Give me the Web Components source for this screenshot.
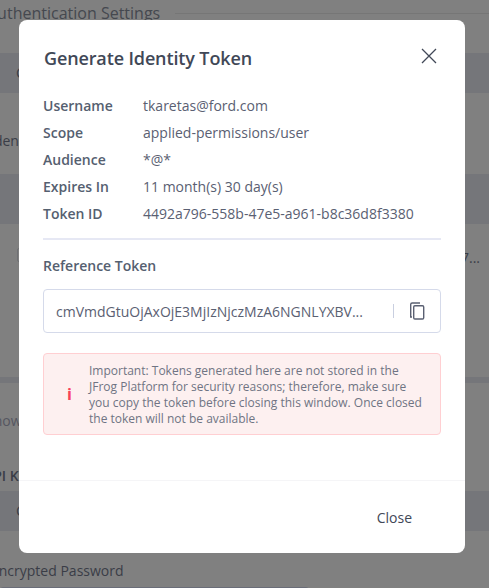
<!DOCTYPE html>
<html>
<head>
<meta charset="utf-8">
<style>
    html, body { margin: 0; padding: 0; height: 100%; overflow: hidden; }
    body { font-family: "Open Sans", sans-serif; background: #808080; }
</style>
</head>
<body>
<settings-page></settings-page>
<token-dialog>
    <info-row label="Username">tkaretas@ford.com</info-row>
    <info-row label="Scope">applied-permissions/user</info-row>
    <info-row label="Audience">*@*</info-row>
    <info-row label="Expires In">11 month(s) 30 day(s)</info-row>
    <info-row label="Token ID">4492a796-558b-47e5-a961-b8c36d8f3380</info-row>
</token-dialog>

<script>
// greyed out page behind the dialog
class SettingsPage extends HTMLElement {
    constructor() {
        super();
        this.attachShadow({mode: "open"});
        this.shadowRoot.innerHTML = `
            <style>
                :host { display: block; height: 588px; overflow: hidden; color: #3a3d47; font-size: 14px; }
                .title { display: flex; align-items: center; gap: 15px; height: 25px; margin-left: -13px; font-size: 16px; color: #45484f; }
                .title i { flex: 1; height: 1px; background: #767676; margin-top: 1px; }
                .band { height: 40px; background: #75767a; padding-left: 16px; line-height: 40px; }
                .label { font-weight: 500; line-height: 20px; }
                .check { display: block; width: 14px; height: 14px; margin-left: 17px; border: 1px solid #6f7074; border-radius: 2px; box-sizing: border-box; }
                .input { height: 10px; width: 309px; margin-top: 6px; border: 1px solid #6a6d78; box-sizing: border-box; border-radius: 3px; }
            </style>
            <div class="title"><span>Authentication Settings</span><i></i></div>
            <div class="band" style="margin-top:28px">C</div>
            <div class="label" style="margin-top:38px;margin-left:-10px">Iden</div>
            <div class="band" style="margin-top:23px;height:50px;padding-top:19px;box-sizing:border-box"><span class="check"></span></div>
            <div style="display:flex;justify-content:space-between;height:60px;line-height:68px;padding-right:9px;align-items:flex-start"><span class="check" style="margin-top:24px"></span><span>7...</span></div>
            <div style="height:6px;margin-top:93px;background:#75767a"></div>
            <div style="margin-top:28px;margin-left:-14px;line-height:20px;color:#555660">Show</div>
            <div class="label" style="margin-top:35px;margin-left:-16px;font-weight:600">API K</div>
            <div class="band" style="margin-top:5px">C</div>
            <div class="label" style="margin-top:30px;margin-left:-9px">Encrypted Password</div>
            <div class="input"></div>
        `;
    }
}
customElements.define("settings-page", SettingsPage);

class InfoRow extends HTMLElement {
    constructor() {
        super();
        this.attachShadow({mode: "open"});
        this.shadowRoot.innerHTML = `
            <style>
                :host { display: flex; height: 27px; align-items: center; font-size: 14px; color: #5a6072; }
                b { width: 100px; font-weight: 600; color: #556070; }
            </style>
            <b></b><slot></slot>
        `;
        this.shadowRoot.querySelector("b").textContent = this.getAttribute("label");
    }
}
customElements.define("info-row", InfoRow);

class TokenDialog extends HTMLElement {
    constructor() {
        super();
        this.attachShadow({mode: "open"});
        this.shadowRoot.innerHTML = `
            <style>
                :host { position: absolute; left: 19px; top: 20px; width: 446px; height: 533px; display: flex; flex-direction: column; background: #fff; border-radius: 8px; }
                .body { flex: 1; padding: 0 24px; }
                .head { display: flex; justify-content: space-between; align-items: center; height: 75px; }
                h2 { margin: 0 0 0 1px; font-size: 18px; font-weight: 600; letter-spacing: -0.13px; color: #414857; }
                .rows { margin-top: -3px; padding-bottom: 11px; border-bottom: 2px solid #e6e8f4; }
                .ref { margin-top: 16px; font-size: 14px; font-weight: 600; color: #556070; line-height: 20px; }
                .field { display: flex; align-items: center; height: 42px; margin-top: 13px; border: 1px solid #d5daea; border-radius: 4px; padding: 0 15px 0 12px; font-size: 14px; color: #5a6072; }
                .field span { flex: 1; }
                .field i { width: 1px; height: 14px; background: #c9cfe0; margin-right: 15px; }
                .alert { display: flex; align-items: center; margin-top: 20px; height: 82px; box-sizing: border-box; border: 1px solid #ffcfd2; border-radius: 4px; background: #fdf0f0; font-size: 12px; line-height: 16px; color: #6f7483; }
                .alert .mark { width: 45px; flex: none; box-sizing: border-box; padding-left: 6px; text-align: center; color: #f8405a; font-weight: 700; font-size: 16px; }
                .alert .text { padding-top: 1px; }
                .foot { display: flex; justify-content: flex-end; align-items: center; height: 72px; border-top: 1px solid #f5f5f7; padding-right: 53px; font-size: 14px; font-weight: 500; color: #414857; }
            </style>
            <div class="body">
                <div class="head">
                    <h2>Generate Identity Token</h2>
                    <svg width="16" height="16" viewBox="0 0 16 16" fill="none" stroke="#414857" stroke-width="1.3" style="margin:-3px 4px 0 0"><path d="M1 1 15 15M15 1 1 15"/></svg>
                </div>
                <div class="rows"><slot></slot></div>
                <div class="ref">Reference Token</div>
                <div class="field">
                    <span>cmVmdGtuOjAxOjE3MjIzNjczMzA6NGNLYXBV...</span><i></i>
                    <svg width="16" height="18" viewBox="0 0 16 18" fill="none" stroke="#5a6072" stroke-width="1.4"><path d="M3 15H1.7V2.5A1.5 1.5 0 0 1 3.2 1H11"/><rect x="4.7" y="3.7" width="10" height="13.3" rx="1.2"/></svg>
                </div>
                <div class="alert">
                    <div class="mark">i</div>
                    <div class="text">Important: Tokens generated here are not stored in the<br>JFrog Platform for security reasons; therefore, make sure<br>you copy the token before closing this window. Once closed<br>the token will not be available.</div>
                </div>
            </div>
            <div class="foot">Close</div>
        `;
    }
}
customElements.define("token-dialog", TokenDialog);
</script>
</body>
</html>
